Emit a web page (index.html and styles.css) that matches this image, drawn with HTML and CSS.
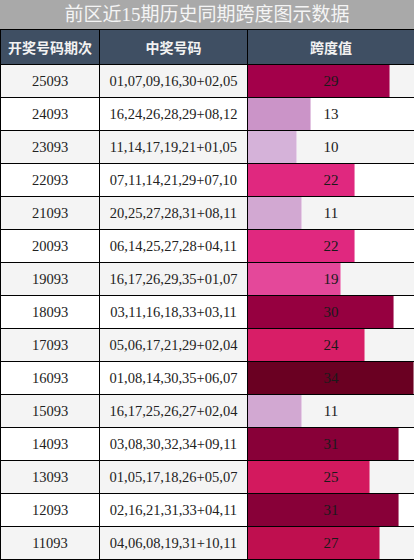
FILE: index.html
```html
<!DOCTYPE html>
<html lang="zh-CN">
<head>
    <meta charset="UTF-8">
    <meta name="viewport" content="width=device-width, initial-scale=1.0">
    <title>前区近15期历史同期跨度图示数据</title>
    <link rel="stylesheet" href="styles.css">
</head>
<body>
<div class="chart">
    <div class="chart-title">前区近15期历史同期跨度图示数据</div>
    <table class="span-table">
        <colgroup>
            <col class="col-issue">
            <col class="col-nums">
            <col class="col-span">
        </colgroup>
        <thead>
            <tr>
                <th>开奖号码期次</th>
                <th>中奖号码</th>
                <th>跨度值</th>
            </tr>
        </thead>
        <tbody id="rows">
            <!-- 数据行由脚本生成 -->
        </tbody>
    </table>
</div>
<script>
    const maxSpan = 34;
    const records = [
        ['25093', '01,07,09,16,30+02,05', 29],
        ['24093', '16,24,26,28,29+08,12', 13],
        ['23093', '11,14,17,19,21+01,05', 10],
        ['22093', '07,11,14,21,29+07,10', 22],
        ['21093', '20,25,27,28,31+08,11', 11],
        ['20093', '06,14,25,27,28+04,11', 22],
        ['19093', '16,17,26,29,35+01,07', 19],
        ['18093', '03,11,16,18,33+03,11', 30],
        ['17093', '05,06,17,21,29+02,04', 24],
        ['16093', '01,08,14,30,35+06,07', 34],
        ['15093', '16,17,25,26,27+02,04', 11],
        ['14093', '03,08,30,32,34+09,11', 31],
        ['13093', '01,05,17,18,26+05,07', 25],
        ['12093', '02,16,21,31,33+04,11', 31],
        ['11093', '04,06,08,19,31+10,11', 27]
    ];

    // 跨度越大颜色越深
    const colors = {
        10: '#d5b2d9', 11: '#d2a8d2', 13: '#cb94c8', 19: '#e4489a',
        22: '#e0287f', 24: '#d81e67', 25: '#d3195e', 27: '#bf0f4f',
        29: '#a3004a', 30: '#960040', 31: '#880038', 34: '#6a0022'
    };

    const tbody = document.getElementById('rows');
    records.forEach(r => {
        const tr = document.createElement('tr');
        const pct = (r[2] / maxSpan * 100).toFixed(2);
        tr.innerHTML = `
            <td>${r[0]}</td>
            <td>${r[1]}</td>
            <td class="span-cell">
                <div class="bar" style="width:${pct}%;background-color:${colors[r[2]]}"></div>
                <span class="span-value">${r[2]}</span>
            </td>
        `;
        tbody.appendChild(tr);
    });
</script>
</body>
</html>
```

FILE: styles.css
```css
body {
    margin: 0;
    font-family: "Liberation Serif", "Noto Sans CJK SC", serif;
    background-color: #fff;
}

.chart {
    width: 414px;
}

.chart-title {
    background-color: #a9a9a9;
    color: #f4f4f4;
    height: 29px;
    line-height: 29px;
    text-align: center;
    font-size: 19px;
    font-family: "Liberation Serif", "Noto Sans CJK SC", sans-serif;
}

.span-table {
    width: 414px;
    border-collapse: collapse;
    table-layout: fixed;
    border: 1px solid #000;
}

.col-issue {
    width: 99px;
}

.col-nums {
    width: 148px;
}

.col-span {
    width: 167px;
}

.span-table th {
    background-color: #3f4f63;
    color: #f2f2f2;
    font-family: "Noto Sans CJK SC", sans-serif;
    font-weight: bold;
    font-size: 14px;
    height: 34px;
    padding: 0;
    border: 1px solid #000;
    text-align: center;
}

.span-table td {
    height: 32px;
    padding: 0;
    border: 1px solid #000;
    text-align: center;
    font-size: 14.5px;
    color: #222;
}

.span-table tbody tr:nth-child(odd) {
    background-color: #f4f4f4;
}

.span-table tbody tr:nth-child(even) {
    background-color: #fff;
}

.span-cell {
    position: relative;
}

.bar {
    position: absolute;
    top: 0;
    bottom: 0;
    left: 0;
    border-right: 1px solid rgba(255, 255, 255, 0.45);
    box-sizing: border-box;
}

.span-value {
    position: relative; /* 数字压在色条上面 */
    font-size: 15px;
    color: #1a1a1a;
}
```
